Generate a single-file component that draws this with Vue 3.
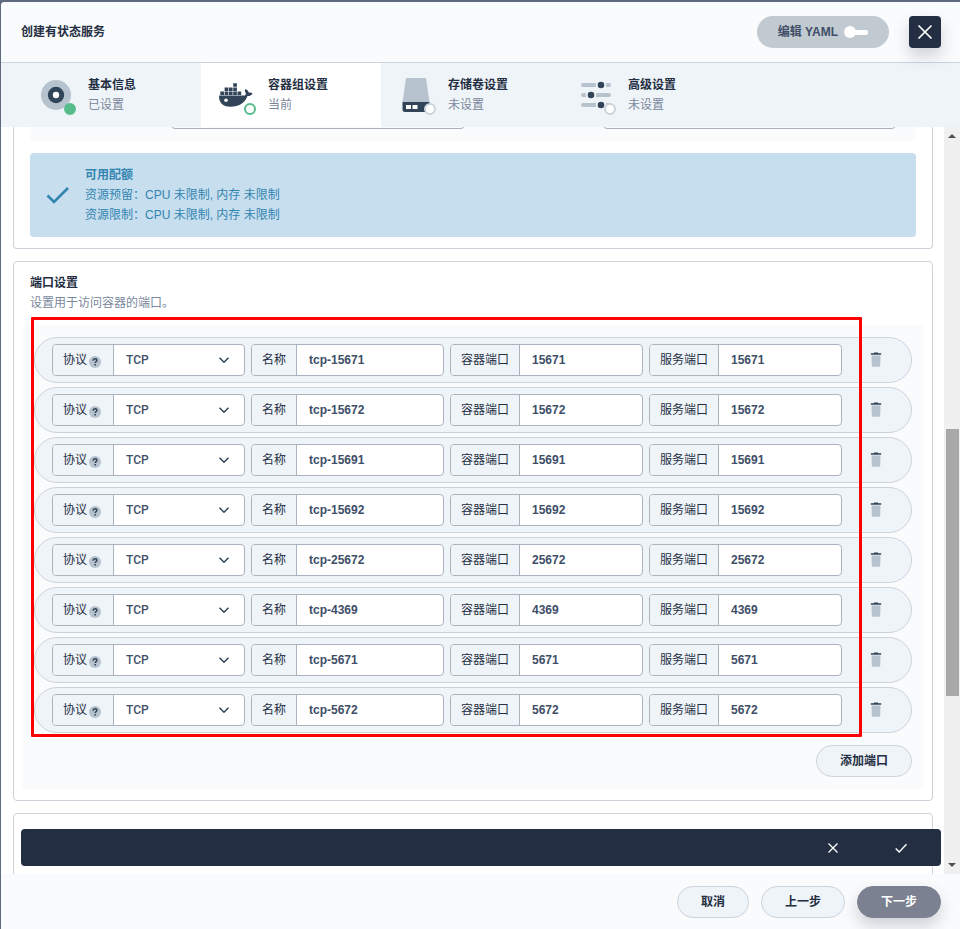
<script setup>
import { ref } from 'vue'

const steps = [
  { key: 'base', name: '基本信息', status: '已设置', badge: 'done' },
  { key: 'docker', name: '容器组设置', status: '当前', badge: 'current' },
  { key: 'storage', name: '存储卷设置', status: '未设置', badge: 'todo' },
  { key: 'sliders', name: '高级设置', status: '未设置', badge: 'todo' },
]

const ports = ref(
  ['15671', '15672', '15691', '15692', '25672', '4369', '5671', '5672'].map((port) => ({
    protocol: 'TCP',
    name: `tcp-${port}`,
    containerPort: port,
    servicePort: port,
  })),
)

function addPort() {
  ports.value.push({ protocol: 'TCP', name: '', containerPort: '', servicePort: '' })
}

function removePort(index) {
  ports.value.splice(index, 1)
}
</script>

<template>
  <div class="backdrop">
    <div class="modal" role="dialog" aria-labelledby="modal-title">
      <header class="header">
        <h1 id="modal-title" class="title">创建有状态服务</h1>
        <button type="button" class="yaml">
          <span>编辑 YAML</span>
          <span class="toggle"></span>
        </button>
        <button type="button" class="close" aria-label="关闭">
          <svg width="16" height="16" viewBox="0 0 16 16">
            <path d="M1.500 1.500 14.500 14.500M14.500 1.500 1.500 14.500" fill="none" stroke="#fff" stroke-width="1.700" />
          </svg>
        </button>
      </header>

      <nav class="steps">
        <a v-for="step in steps" :key="step.key" href="#" class="step" :class="{ active: step.badge === 'current' }">
          <span class="step-icon">
            <svg v-if="step.key === 'base'" width="40" height="40" viewBox="0 0 40 40">
              <circle cx="20" cy="20" r="15" fill="#b6c2cd" />
              <circle cx="20" cy="20" r="5.700" fill="#fff" stroke="#324558" stroke-width="5" />
            </svg>
            <svg v-else-if="step.key === 'docker'" width="40" height="40" viewBox="0 0 40 40">
              <g fill="#324558">
                <path d="M3 20.600H28.500C29.800 20.200 30.200 19.200 29.500 17.500 28.700 16 28.600 14.700 29.600 13.900 31.300 14.600 32.600 16.200 32.800 17.700 34.300 17.300 35.700 17.600 36.500 18.500 35.400 20.500 33.500 21.100 31.500 21 28.800 28 23 31.800 14.500 31.800 6.500 31.800 2.800 27.500 3 20.600Z" />
                <path d="M4.300 16.600h3.700v3.400H4.300zM8.600 16.600h3.700v3.400H8.600zM12.900 16.600h3.700v3.400h-3.700zM17.200 16.600h3.700v3.400h-3.700zM21.500 16.600h3.700v3.400h-3.700z" />
                <path d="M8.600 12.500h3.700v3.500H8.600zM12.900 12.500h3.700v3.500h-3.700zM17.200 12.500h3.700v3.500h-3.700zM17.200 8.300h3.700v3.500h-3.700z" />
              </g>
              <circle cx="10" cy="25.300" r="1.800" fill="#fff" />
            </svg>
            <svg v-else-if="step.key === 'storage'" width="40" height="40" viewBox="0 0 40 40">
              <path d="M10 3H30L33.500 27H6.500Z" fill="#b6c2cd" />
              <path d="M6.500 27H33.500V34.500Q33.500 37 31 37H9Q6.500 37 6.500 34.500Z" fill="#324558" />
              <path d="M10 30h5v4h-5zM16.500 30h5v4h-5z" fill="#fff" />
            </svg>
            <svg v-else width="40" height="40" viewBox="0 0 40 40">
              <path d="M7 10H33M7 20H33M7 30H33" stroke="#b6c2cd" stroke-width="4" stroke-linecap="round" />
              <g fill="#324558" stroke="#eff4f9" stroke-width="2">
                <circle cx="25" cy="10" r="4.300" />
                <circle cx="15" cy="20" r="4.300" />
                <circle cx="25" cy="30" r="4.300" />
              </g>
            </svg>
            <i class="badge" :class="step.badge"></i>
          </span>
          <span class="step-text">
            <strong>{{ step.name }}</strong>
            <span>{{ step.status }}</span>
          </span>
        </a>
      </nav>

      <div class="body">
        <main class="content">
          <section class="card card-first">
            <div class="limits">
              <input type="text" aria-label="CPU" />
              <input type="text" aria-label="内存" />
            </div>
            <div class="quota">
              <svg width="24" height="24" viewBox="0 0 24 24">
                <path d="M1.500 12.500 8 19 22 5" fill="none" stroke="#3385b0" stroke-width="2.600" />
              </svg>
              <div>
                <strong>可用配额</strong>
                <p>资源预留：CPU 未限制, 内存 未限制</p>
                <p>资源限制：CPU 未限制, 内存 未限制</p>
              </div>
            </div>
          </section>

          <section class="card card-ports">
            <h2>端口设置</h2>
            <p class="desc">设置用于访问容器的端口。</p>
            <div class="panel">
              <div class="ports">
                <div v-for="(port, i) in ports" :key="i" class="port">
                  <div class="field">
                    <label :for="`protocol-${i}`">
                      协议
                      <svg class="help" width="12" height="12" viewBox="0 0 12 12">
                        <circle cx="6" cy="6" r="6" fill="#b6c2cd" />
                        <path d="M4.200 4.700C4.200 3.400 5 2.800 6.100 2.800 7.200 2.800 7.900 3.400 7.900 4.300 7.900 5.500 6.200 5.500 6.200 7.100M6.200 8v1.500" fill="none" stroke="#324558" stroke-width="1.500" />
                      </svg>
                    </label>
                    <div class="select">
                      <select :id="`protocol-${i}`" v-model="port.protocol">
                        <option>TCP</option>
                        <option>UDP</option>
                      </select>
                      <svg width="12" height="12" viewBox="0 0 12 12">
                        <path d="M1.500 3.800 6 8.200 10.500 3.800" fill="none" stroke="#324558" stroke-width="1.500" />
                      </svg>
                    </div>
                  </div>
                  <div class="field">
                    <label :for="`name-${i}`">名称</label>
                    <input :id="`name-${i}`" v-model="port.name" type="text" />
                  </div>
                  <div class="field">
                    <label :for="`container-${i}`">容器端口</label>
                    <input :id="`container-${i}`" v-model="port.containerPort" type="text" />
                  </div>
                  <div class="field">
                    <label :for="`service-${i}`">服务端口</label>
                    <input :id="`service-${i}`" v-model="port.servicePort" type="text" />
                  </div>
                  <button type="button" class="trash" aria-label="删除" @click="removePort(i)">
                    <svg width="16" height="16" viewBox="0 0 16 16">
                      <path d="M3.500 3.500H12.500L12.200 13.500Q12.100 14.800 11 14.800H5Q3.900 14.800 3.800 13.500Z" fill="#b6c2cd" />
                      <path d="M2.800 1.300H5.500L6.200 .600H9.800L10.500 1.300H13.200V2.700H2.800Z" fill="#324558" />
                    </svg>
                  </button>
                </div>
                <div class="highlight"></div>
              </div>
              <button type="button" class="btn" @click="addPort">添加端口</button>
            </div>
          </section>

          <section class="card card-next"></section>
        </main>

        <div class="scrollbar" aria-hidden="true">
          <svg width="8" height="4" viewBox="0 0 8 4"><path d="M0 4 4 0 8 4Z" fill="#505050" /></svg>
          <div class="track"><div class="thumb"></div></div>
          <svg width="8" height="4" viewBox="0 0 8 4"><path d="M0 0 4 4 8 0Z" fill="#505050" /></svg>
        </div>

        <div class="confirm">
          <button type="button" aria-label="取消编辑">
            <svg width="12" height="12" viewBox="0 0 12 12">
              <path d="M1.500 1.500 10.500 10.500M10.500 1.500 1.500 10.500" fill="none" stroke="#fff" stroke-width="1.300" />
            </svg>
          </button>
          <button type="button" aria-label="确定">
            <svg width="12" height="12" viewBox="0 0 12 12">
              <path d="M.700 6.500 4.200 10 11.500 2.300" fill="none" stroke="#fff" stroke-width="1.400" />
            </svg>
          </button>
        </div>
      </div>

      <footer class="footer">
        <button type="button" class="btn">取消</button>
        <button type="button" class="btn">上一步</button>
        <button type="button" class="btn primary">下一步</button>
      </footer>
    </div>
  </div>
</template>

<style>
body {
  background: #5f6980;
}
</style>

<style scoped>
* {
  box-sizing: border-box;
}

.backdrop {
  height: 100vh;
  padding: 2px 0 0 1px;
  background: #5f6980;
  color: #242e42;
  font: 12px/20px "Liberation Sans", "Noto Sans CJK SC", sans-serif;
}

h1,
h2,
p {
  margin: 0;
  font-size: 12px;
}

button,
input,
select {
  padding: 0;
  border: 0;
  background: none;
  color: inherit;
  font: inherit;
  font-weight: 700;
}

svg {
  display: block;
  flex: none;
}

.modal {
  display: flex;
  flex-direction: column;
  height: 100%;
  overflow: hidden;
  border-radius: 4px 0 0 0;
  background: #fff;
}

.header {
  display: flex;
  align-items: center;
  gap: 20px;
  flex: none;
  height: 61px;
  padding: 0 19px 0 20px;
  border-bottom: 1px solid #ccd3db;
  background: #fafbfd;
}

.title {
  flex: 1;
}

.yaml {
  display: flex;
  align-items: center;
  gap: 6px;
  height: 32px;
  padding: 0 21px;
  border-radius: 16px;
  background: #c1c9d1;
  color: #404e68;
}

.toggle {
  display: flex;
  align-items: center;
  width: 24px;
  height: 12px;
}

.toggle::before {
  width: 12px;
  height: 12px;
  border-radius: 6px;
  background: #fff;
  content: "";
}

.toggle::after {
  flex: 1;
  height: 5px;
  margin-left: -2px;
  border-radius: 0 2px 2px 0;
  background: #fff;
  content: "";
}

.close {
  position: relative;
  display: flex;
  align-items: center;
  justify-content: center;
  width: 32px;
  height: 32px;
  border-radius: 4px;
  background: #242e42;
  box-shadow: 0 8px 16px rgba(36, 46, 66, 0.2);
}

.steps {
  display: flex;
  flex: none;
  height: 64px;
  padding-left: 20px;
  background: #eff4f9;
}

.step {
  display: flex;
  align-items: center;
  gap: 12px;
  width: 180px;
  padding-left: 15px;
  color: #242e42;
  text-decoration: none;
}

.step.active {
  background: #fff;
}

.step-icon {
  position: relative;
}

.badge {
  position: absolute;
  right: 0;
  bottom: 0;
  width: 12px;
  height: 12px;
  border: 2px solid #ccd3db;
  border-radius: 50%;
  background: #fff;
}

.badge.done {
  border-color: #55bc8a;
  background: #55bc8a;
}

.badge.current {
  border-color: #55bc8a;
}

.step-text {
  display: flex;
  flex-direction: column;
}

.step-text span {
  color: #79879c;
}

.body {
  position: relative;
  display: flex;
  flex: 1;
  min-height: 0;
  overflow: hidden;
}

.content {
  flex: 1;
  min-width: 0;
  padding: 0 11px 0 12px;
}

.card {
  margin-bottom: 12px;
  border: 1px solid #ccd3db;
  border-radius: 4px;
  background: #fff;
}

.card-first {
  padding: 0 16px 11px;
  border-top: 0;
  border-radius: 0 0 4px 4px;
}

.limits {
  display: flex;
  align-items: flex-end;
  gap: 138px;
  height: 14px;
  margin-bottom: 12px;
  padding: 0 20px 12px 141px;
  overflow: hidden;
  border-radius: 0 0 4px 4px;
  background: #fafbfd;
}

.limits input {
  flex: 1;
  min-width: 0;
  height: 32px;
  border: 1px solid #abb4be;
  border-radius: 4px;
}

.quota {
  display: flex;
  align-items: center;
  gap: 15px;
  padding: 12px 16px;
  border-radius: 4px;
  background: #c7deef;
  color: #3385b0;
}

.card-ports {
  padding: 11px 8px;
}

.card-ports h2,
.desc {
  padding: 0 8px;
}

.desc {
  color: #79879c;
}

.panel {
  display: flex;
  flex-direction: column;
  align-items: flex-end;
  gap: 12px;
  margin-top: 12px;
  padding: 12px;
  border-radius: 4px;
  background: #fafbfd;
}

.ports {
  position: relative;
  display: flex;
  flex-direction: column;
  gap: 4px;
  width: 100%;
}

.highlight {
  position: absolute;
  inset: -20px 50px -4px -3px;
  border: 3px solid #f00;
  border-radius: 1px;
  pointer-events: none;
}

.port {
  display: flex;
  align-items: center;
  gap: 6px;
  height: 46px;
  padding: 0 27px 0 17px;
  border: 1px solid #ccd3db;
  border-radius: 23px;
  background: #eff4f9;
}

.field {
  display: flex;
  flex: 1;
  min-width: 0;
  height: 32px;
  overflow: hidden;
  border: 1px solid #abb4be;
  border-radius: 4px;
  background: #fff;
}

.field label {
  display: flex;
  align-items: center;
  gap: 2px;
  flex: none;
  padding: 0 10px;
  background: #eff4f9;
}

.help {
  margin: 4px 2px 0 0;
}

.field > input,
.select {
  flex: 1;
  min-width: 0;
  border-left: 1px solid #abb4be;
}

.field > input {
  padding: 0 12px;
  color: #404e68;
}

.select {
  position: relative;
}

.select select {
  width: 100%;
  height: 100%;
  padding: 0 12px;
  appearance: none;
  color: #404e68;
  font-family: Roboto, "Noto Sans CJK SC", sans-serif;
  font-weight: 500;
}

.select svg {
  position: absolute;
  top: 9px;
  right: 14px;
  pointer-events: none;
}

.trash {
  margin-left: 20px;
}

.btn {
  height: 32px;
  padding: 0 23px;
  border: 1px solid #ccd3db;
  border-radius: 16px;
  background: #eff4f9;
}

.btn.primary {
  border-color: #7b8190;
  background: #7b8190;
  box-shadow: 0 8px 16px rgba(36, 46, 66, 0.2);
  color: #fff;
}

.card-next {
  height: 200px;
}

.scrollbar {
  display: flex;
  flex-direction: column;
  align-items: center;
  gap: 7px;
  width: 16px;
  padding: 7px 0;
  background: #f0f0f0;
}

.track {
  display: flex;
  flex: 1;
  flex-direction: column;
  align-items: center;
  width: 100%;
}

.track::before {
  flex: 284;
  content: "";
}

.track::after {
  flex: 160;
  content: "";
}

.thumb {
  flex: 267;
  width: 13px;
  background: #a8a8a8;
}

.confirm {
  position: absolute;
  right: 19px;
  bottom: 8px;
  left: 20px;
  display: flex;
  align-items: center;
  justify-content: flex-end;
  gap: 56px;
  height: 37px;
  padding: 0 34px;
  border-radius: 4px;
  background: #242e42;
}

.footer {
  display: flex;
  align-items: center;
  justify-content: flex-end;
  gap: 12px;
  flex: none;
  height: 55px;
  padding: 0 19px;
  background: #fafbfd;
}
</style>
